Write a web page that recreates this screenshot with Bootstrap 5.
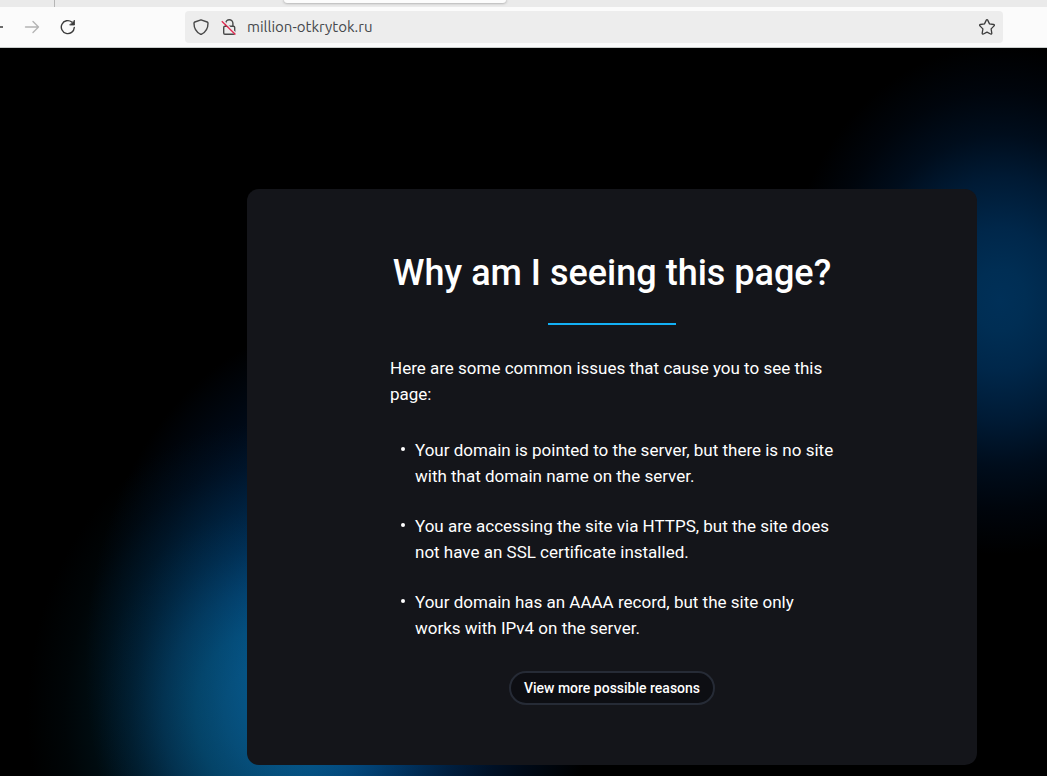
<!DOCTYPE html>
<html lang="en">
<head>
<meta charset="utf-8">
<meta name="viewport" content="width=device-width, initial-scale=1">
<title>million-otkrytok.ru</title>
<link href="https://cdn.jsdelivr.net/npm/bootstrap@5.3.0/dist/css/bootstrap.min.css" rel="stylesheet">
<style>
  body { font-family: Roboto, sans-serif; background: #000; }
  .tab-strip { height: 7px; background: #eaeaea; }
  .tab-divider { width: 55px; border-right: 1px solid #b5b5b5; }
  .active-tab { width: 222px; height: 3px; margin-left: 229px; background: #fcfcfc; border-radius: 0 0 4px 4px; box-shadow: 0 0 3px rgba(0,0,0,.45); }
  .toolbar { height: 41px; background: #fbfbfb; border-bottom: 1px solid #c9cdcc; }
  .nav-buttons { width: 197px; gap: 20px; margin-left: -12px; }
  .tool { color: #3c3c3c; line-height: 0; }
  .tool:disabled { color: #b4b4b4; opacity: 1; }
  .address { height: 32px; background: #ededed; border-radius: 4px; margin-right: 44px; padding: 0 8px; color: #4a4a4a; }
  .address input { font: 15px/20px Ubuntu, "Noto Sans", sans-serif; color: #45484c; margin-left: 10px; outline: 0; }
  .stage {
    padding: 141px 70px 11px 247px;
    background:
      radial-gradient(ellipse 215px 255px at 1000px 252px, #003058 0%, #002e54 12%, #00274a 28%, #001a34 48%, #000d1c 65%, #00050c 82%, #000 100%),
      radial-gradient(ellipse 255px 340px at 340px 615px, #003068 0%, #002a5c 30%, #001a3a 52%, #000a18 78%, #000 100%),
      radial-gradient(ellipse 235px 290px at 262px 665px, #06384e 0%, #06364a 16%, #043244 28%, #032636 42%, #011822 56%, #000d12 70%, #000507 84%, #000 100%);
    background-blend-mode: screen;
  }
  .reason-card { background: #14151a; border-radius: 12px; padding: 60px 20px; }
  .reason-body { max-width: 444px; font-size: 17px; line-height: 26px; }
  .reason-body h1 { font-size: 36px; line-height: 48px; font-weight: 500; }
  .accent { width: 128px; height: 2px; background: #13b0f5; margin-top: 26px; margin-bottom: 30px; }
  .reasons { margin: 30px 0; display: grid; gap: 24px; }
  .reasons li { display: flex; }
  .reasons li::before { content: ""; flex: none; width: 4px; height: 4px; margin: 10px 10px 0 11px; border-radius: 50%; background: #fff; }
  .more { height: 34px; padding: 0 13px; border: 2px solid #262b36; border-radius: 17px; background: #0d0e13; color: #fff; font-size: 14px; line-height: 20px; font-weight: 500; }
</style>
</head>
<body class="min-vh-100 d-flex flex-column overflow-hidden">
<header>
  <div class="tab-strip d-flex align-items-start">
    <div class="tab-divider align-self-stretch"></div>
    <div class="active-tab"></div>
  </div>
  <div class="toolbar d-flex align-items-center">
    <nav class="nav-buttons d-flex flex-shrink-0" aria-label="Browser navigation">
      <button class="tool border-0 bg-transparent p-0" aria-label="Back">
        <svg width="16" height="16" fill="none" stroke="currentColor" stroke-width="1.3"><path d="M15 8H2M7 2 1.500 8 7 14"/></svg>
      </button>
      <button class="tool border-0 bg-transparent p-0" aria-label="Forward" disabled>
        <svg width="16" height="16" fill="none" stroke="currentColor" stroke-width="1.4" stroke-linecap="round" stroke-linejoin="round"><path d="M1.500 8H14.500M9 2.500l5.500 5.500L9 13.500"/></svg>
      </button>
      <button class="tool border-0 bg-transparent p-0" aria-label="Reload">
        <svg width="16" height="16" fill="none" stroke="currentColor" stroke-width="1.4" stroke-linecap="round"><path d="M14.300 8.500A6.500 6.500 0 1 1 11.800 3"/><path d="M14.500 1.500V6H10z" fill="currentColor" stroke-width=".8" stroke-linejoin="round"/></svg>
      </button>
    </nav>
    <div class="address flex-grow-1 d-flex align-items-center">
      <svg class="me-2 flex-shrink-0" width="16" height="16" fill="none" stroke="currentColor" stroke-width="1.400" stroke-linejoin="round"><path d="M8 .8 14.200 3c.7.3.8.6.8 1.300 0 4.700-2 8.500-6.100 10.700-.6.300-1.200.300-1.800 0C3 12.800 1 9 1 4.300c0-.7.100-1 .8-1.300z"/></svg>
      <svg class="ms-1 flex-shrink-0" width="16" height="16" fill="none" stroke="currentColor" stroke-width="1.400"><path d="M4.700 7V4.300a3.600 3.600 0 0 1 7.200 0V7"/><rect x="2.700" y="7.200" width="11" height="8" rx="1.300"/><path d="m2 1.500 13 13" stroke="#ededed" stroke-width="1.500"/><path d="m.8 2.200 13.600 13.300" stroke="#e22850" stroke-width="1.300"/></svg>
      <input class="border-0 bg-transparent p-0 flex-grow-1" type="text" value="million-otkrytok.ru" aria-label="Address" spellcheck="false">
      <button class="tool border-0 bg-transparent p-0" aria-label="Bookmark this page">
        <svg width="16" height="16" fill="none" stroke="currentColor" stroke-width="1.300" stroke-linejoin="round"><path d="M7.300 1.100c.3-.6 1.100-.6 1.400 0l1.800 3.800 4.100.6c.8.100 1 .9.500 1.400L12.100 9.900l.7 4.200c.1.800-.5 1.200-1.200.9L8 13.100 4.400 15c-.7.3-1.300-.1-1.200-.9l.7-4.200L.9 6.900c-.5-.5-.3-1.300.5-1.400l4.100-.6z"/></svg>
      </button>
    </div>
  </div>
</header>
<main class="stage flex-grow-1">
  <section class="reason-card text-white">
    <div class="reason-body mx-auto">
      <h1 class="text-center mb-0">Why am I seeing this page?</h1>
      <div class="accent mx-auto"></div>
      <p class="mb-0">Here are some common issues that cause you to see this page:</p>
      <ul class="reasons list-unstyled">
        <li>Your domain is pointed to the server, but there is no site with that domain name on the server.</li>
        <li>You are accessing the site via HTTPS, but the site does not have an SSL certificate installed.</li>
        <li>Your domain has an AAAA record, but the site only works with IPv4 on the server.</li>
      </ul>
      <div class="text-center lh-1"><button class="more">View more possible reasons</button></div>
    </div>
  </section>
</main>
<script src="https://cdn.jsdelivr.net/npm/bootstrap@5.3.0/dist/js/bootstrap.bundle.min.js"></script>
</body>
</html>
